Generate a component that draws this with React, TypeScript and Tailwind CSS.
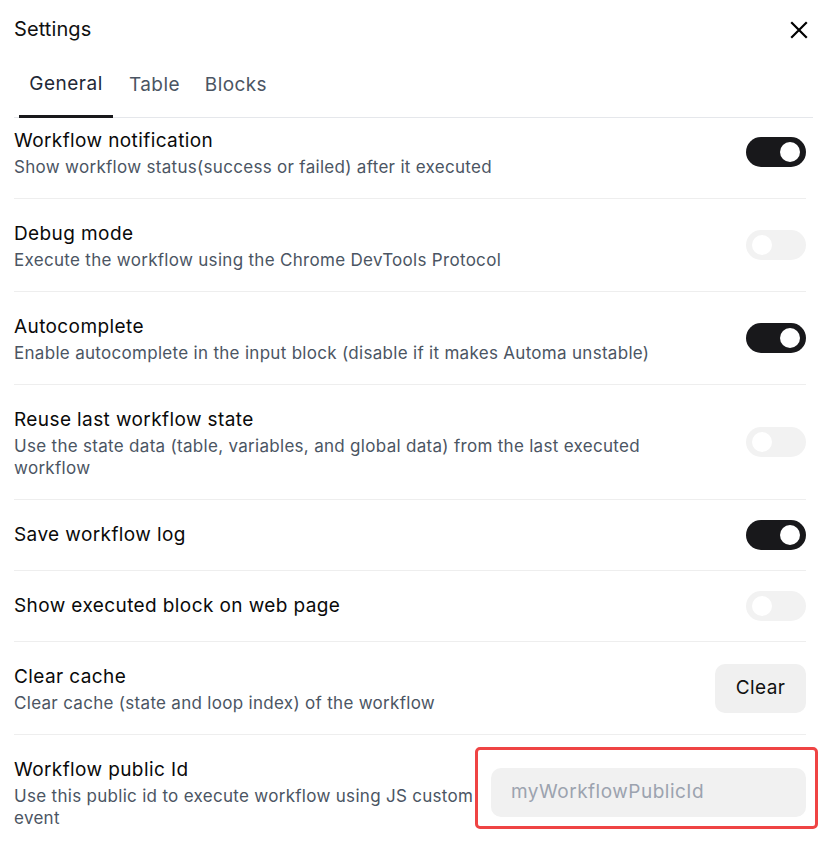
import React from "react";

function Toggle({ on }: { on: boolean }) {
  return (
    <div
      className={
        "w-[60px] h-[30px] rounded-full flex items-center px-[6px] shrink-0 " +
        (on ? "bg-[#18181b] justify-end" : "bg-[#f2f2f2] justify-start")
      }
    >
      <div className="w-[20px] h-[20px] rounded-full bg-white" />
    </div>
  );
}

type Row = {
  title: string;
  desc?: string;
  toggle?: boolean;
  kind?: "toggle" | "clear" | "input";
};

const rows: Row[] = [
  { title: "Workflow notification", desc: "Show workflow status(success or failed) after it executed", toggle: true },
  { title: "Debug mode", desc: "Execute the workflow using the Chrome DevTools Protocol", toggle: false },
  { title: "Autocomplete", desc: "Enable autocomplete in the input block (disable if it makes Automa unstable)", toggle: true },
  { title: "Reuse last workflow state", desc: "Use the state data (table, variables, and global data) from the last executed workflow", toggle: false },
  { title: "Save workflow log", toggle: true },
  { title: "Show executed block on web page", toggle: false },
  { title: "Clear cache", desc: "Clear cache (state and loop index) of the workflow", kind: "clear" },
  { title: "Workflow public Id", desc: "Use this public id to execute workflow using JS custom event", kind: "input" },
];

export default function App() {
  return (
    <div className="w-[820px] h-[843px] bg-white overflow-hidden relative font-['Inter',sans-serif]">
      <div className="flex items-center justify-between pl-[14px] pr-[12px] pt-[16px] h-[42px]">
        <span className="text-[20px] leading-[26px] text-[#111] tracking-[0.1px]">Settings</span>
        <svg width="18" height="18" viewBox="0 0 18 18" className="mt-[1px]">
          <path d="M2 2 L16 16 M16 2 L2 16" stroke="#000" strokeWidth="2.2" strokeLinecap="square" />
        </svg>
      </div>
      <div className="ml-[14px] mr-[7px] mt-[11px] flex border-b border-[#e5e7eb]">
        <div className="ml-[5px] w-[94px] h-[65px] flex items-center justify-center border-b-[3px] border-[#18181b] -mb-[1px]">
          <span className="text-[19px] tracking-[0.5px] text-[#1f2937]">General</span>
        </div>
        <div className="pl-[16px] pr-[25px] h-[64px] flex items-center">
          <span className="text-[19px] tracking-[0.4px] text-[#4b5563]">Table</span>
        </div>
        <div className="h-[64px] flex items-center">
          <span className="text-[19px] tracking-[0.4px] text-[#4b5563]">Blocks</span>
        </div>
      </div>
      <div className="mx-[14px]">
        {rows.map((r, i) => (
          <div
            key={r.title}
            className={
              "flex items-center " +
              (i === 0 ? "pt-[8px] pb-[20px]" : "py-[20px] border-t border-[#eeeeee]")
            }
          >
            <div className={"flex-1 min-w-0 " + (r.kind === "input" ? "pr-[16px]" : "pr-[80px]")}>
              <div className="text-[19px] tracking-[0.4px] leading-[30px] text-[#0a0a0a]">{r.title}</div>
              {r.desc && (
                <div className="text-[17px] tracking-[0.3px] leading-[22px] text-[#4b5563]">{r.desc}</div>
              )}
            </div>
            {r.kind === "clear" ? (
              <div className="w-[91px] h-[49px] rounded-[10px] bg-[#f0f0f0] flex items-center justify-center text-[19px] tracking-[0.4px] text-[#111]">
                Clear
              </div>
            ) : r.kind === "input" ? (
              <div className="relative">
                <div className="w-[315px] h-[49px] rounded-[10px] bg-[#f1f1f1] flex items-center pl-[20px] text-[19px] tracking-[0.5px] text-[#9ca3af]">
                  myWorkflowPublicId
                </div>
                <div className="absolute -left-[16px] -right-[12px] -top-[21px] -bottom-[12px] border-[3px] border-[#ef4444] rounded-[5px]" />
              </div>
            ) : (
              <Toggle on={!!r.toggle} />
            )}
          </div>
        ))}
      </div>
    </div>
  );
}
